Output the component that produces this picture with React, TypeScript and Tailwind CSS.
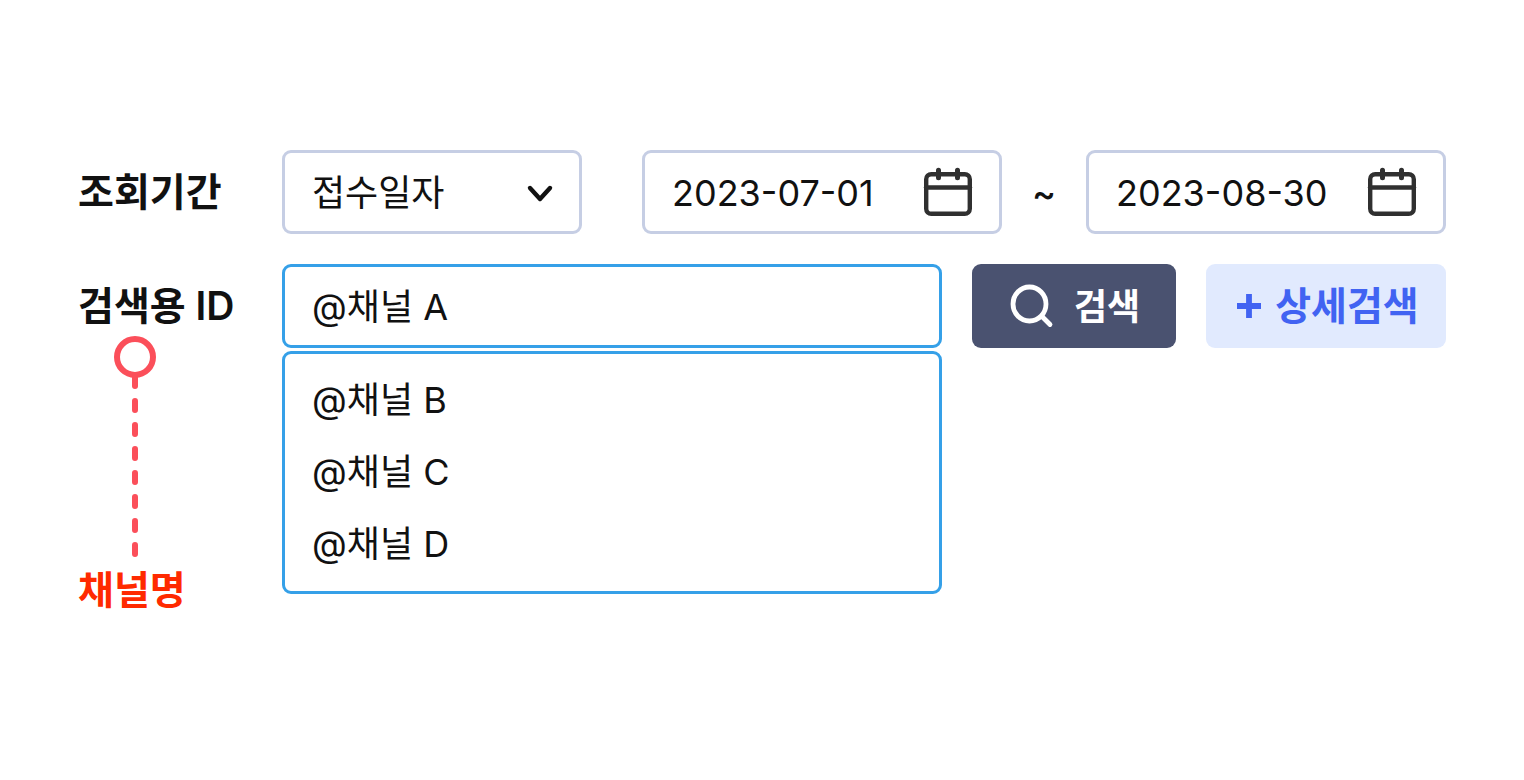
import { useState } from "react";

const fieldClass =
  "h-[84px] w-full min-w-0 rounded-[9px] border-[3px] border-[#c6cee4] bg-white pt-0.5 pl-[27px] text-[36px] text-[#111111] outline-none";

function CalendarIcon() {
  return (
    <svg width="50" height="50" viewBox="0 0 50 50" fill="none" stroke="#303030" strokeWidth="4.400" strokeLinecap="round" aria-hidden="true">
      <rect x="3.200" y="7.200" width="43.600" height="39.600" rx="5" />
      <path d="M3 20.500H47" />
      <path d="M15.500 3.200V10.800M34.500 3.200V10.800" strokeWidth="5" />
    </svg>
  );
}

function DateField({ label, value }: { label: string; value: string }) {
  const [date, setDate] = useState(value);
  return (
    <div className="relative min-w-0 flex-[6]">
      <input
        type="text"
        aria-label={label}
        value={date}
        onChange={(e) => setDate(e.target.value)}
        className={`${fieldClass} pr-[84px]`}
      />
      <button type="button" aria-label={`${label} 선택`} className="absolute top-[17px] right-[29px]">
        <CalendarIcon />
      </button>
    </div>
  );
}

function Connector() {
  return (
    <svg className="ml-9" width="42" height="222" viewBox="0 0 42 222" fill="none" stroke="#fb4f5a" strokeWidth="6" strokeLinecap="round" aria-hidden="true">
      <circle cx="21" cy="21" r="18" />
      <path d="M21 41V50" />
      <path d="M21 65V218" strokeDasharray="9 15" />
    </svg>
  );
}

export default function App() {
  const [channel, setChannel] = useState("@채널 A");
  const options = ["@채널 B", "@채널 C", "@채널 D"];

  return (
    <main className="min-h-screen bg-white px-[78px] pt-[150px] pb-12 font-['Inter','Noto_Sans_CJK_KR',sans-serif] text-[#111111]">
      <form className="flex flex-col gap-[30px]" onSubmit={(e) => e.preventDefault()}>
        <div className="flex items-center">
          <label htmlFor="period" className="w-[204px] shrink-0 text-[39px] leading-[48px] font-semibold">
            조회기간
          </label>
          <div className="relative min-w-0 flex-[5]">
            <select id="period" className={`${fieldClass} appearance-none pr-[60px]`}>
              <option>접수일자</option>
            </select>
            <svg className="pointer-events-none absolute top-[34px] right-[28px]" width="28" height="20" viewBox="0 0 28 20" fill="none" stroke="#111111" strokeWidth="4.400" strokeLinecap="round" strokeLinejoin="round" aria-hidden="true">
              <path d="M4 4L14 15L24 4" />
            </svg>
          </div>
          <div className="w-[60px] shrink-0" />
          <DateField label="시작일" value="2023-07-01" />
          <span className="w-[84px] shrink-0 pt-0.5 text-center text-[36px] font-medium">~</span>
          <DateField label="종료일" value="2023-08-30" />
        </div>

        <div className="flex items-start">
          <div className="flex w-[204px] shrink-0 flex-col pt-[18px]">
            <label htmlFor="channel" className="mb-1.5 text-[39px] leading-[48px] font-semibold">
              검색용 ID
            </label>
            <Connector />
            <strong className="mt-2 text-[39px] leading-[48px] font-semibold text-[#ff2a00]">채널명</strong>
          </div>
          <div className="flex min-w-0 flex-1 flex-col gap-[3px]">
            <input
              id="channel"
              type="text"
              role="combobox"
              aria-expanded="true"
              aria-controls="channel-list"
              value={channel}
              onChange={(e) => setChannel(e.target.value)}
              className="h-[84px] w-full rounded-[9px] border-[3px] border-[#35a0e8] bg-white px-[27px] pb-1 text-[36px] outline-none"
            />
            <ul id="channel-list" role="listbox" className="rounded-[9px] border-[3px] border-[#35a0e8] bg-white pt-[10px] pb-[11px]">
              {options.map((option) => (
                <li
                  key={option}
                  role="option"
                  aria-selected={channel === option}
                  onClick={() => setChannel(option)}
                  className="flex h-[72px] cursor-pointer items-center px-[27px] text-[36px]"
                >
                  {option}
                </li>
              ))}
            </ul>
          </div>
          <button type="submit" className="ml-[30px] flex h-[84px] w-[204px] shrink-0 items-center justify-center gap-5 rounded-[9px] bg-[#4a5270] pt-0.5 text-[36px] font-bold text-white">
            <svg width="46" height="46" viewBox="0 0 46 46" fill="none" stroke="currentColor" strokeWidth="4.800" strokeLinecap="round" aria-hidden="true">
              <ellipse cx="21.500" cy="20" rx="16.500" ry="17" />
              <path d="M34 32.500L42 40.500" />
            </svg>
            검색
          </button>
          <button type="button" className="ml-[30px] flex h-[84px] w-[240px] shrink-0 items-center justify-center gap-3.5 rounded-[9px] bg-[#e1eafe] pl-1 text-[39px] font-bold text-[#4163f2]">
            <svg width="24" height="24" viewBox="0 0 24 24" fill="none" stroke="currentColor" strokeWidth="5.800" aria-hidden="true">
              <path d="M12 0V24M0 12H24" />
            </svg>
            상세검색
          </button>
        </div>
      </form>
    </main>
  );
}
